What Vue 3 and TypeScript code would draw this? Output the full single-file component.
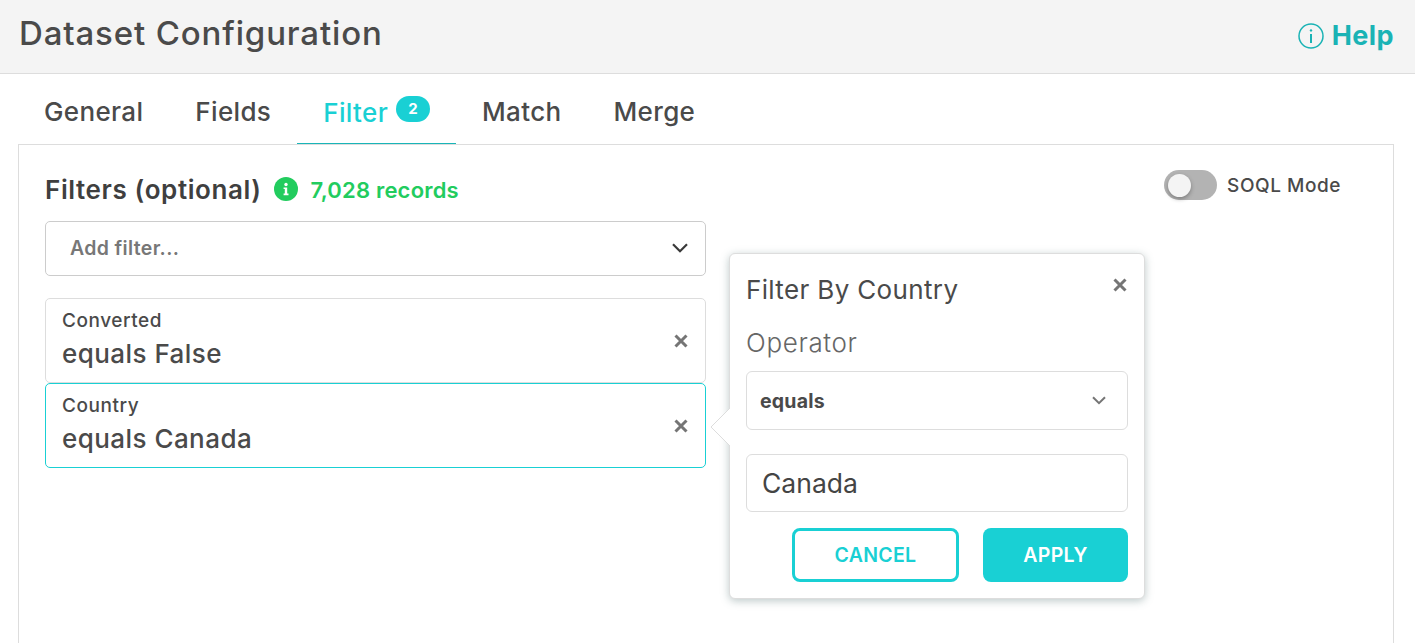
<script setup lang="ts">
const tabs = [
  { label: 'General' },
  { label: 'Fields' },
  { label: 'Filter', badge: 2, active: true },
  { label: 'Match' },
  { label: 'Merge' },
]
const filters = [
  { field: 'Converted', value: 'equals False', active: false },
  { field: 'Country', value: 'equals Canada', active: true },
]
</script>

<template>
  <div class="page">
    <header class="top">
      <h1>Dataset Configuration</h1>
      <a class="help">
        <svg width="26" height="26" viewBox="0 0 26 26" fill="none" stroke="#1ab3b5" stroke-width="1.5">
          <circle cx="13" cy="13" r="12" />
          <path d="M13 11v9" stroke-width="2" />
          <circle cx="13" cy="7.4" r="1.2" fill="#1ab3b5" stroke="none" />
        </svg>
        <span>Help</span>
      </a>
    </header>

    <nav class="tabs">
      <div v-for="t in tabs" :key="t.label" class="tab" :class="{ active: t.active }">
        {{ t.label }}<sup v-if="t.badge" class="badge">{{ t.badge }}</sup>
      </div>
    </nav>

    <section class="panel">
      <div class="col">
        <div class="title-row">
          <h2>Filters (optional)</h2>
          <svg class="info" width="24" height="24" viewBox="0 0 24 24">
            <circle cx="12" cy="12" r="12" fill="#22cc5e" />
            <circle cx="12" cy="7.5" r="1.7" fill="#fff" />
            <path d="M9.6 10.4h3.6v6.2h1.3v1.6H9.6v-1.6h1.2v-4.6H9.6z" fill="#fff" />
          </svg>
          <span class="records">7,028 records</span>
        </div>

        <div class="add">
          <span>Add filter...</span>
          <svg width="16" height="10" viewBox="0 0 16 10" fill="none" stroke="#3a3a3a" stroke-width="2.2">
            <path d="M1 1.2l7 7 7-7" />
          </svg>
        </div>

        <div class="rows">
          <div v-for="f in filters" :key="f.field" class="row" :class="{ active: f.active }">
            <div>
              <div class="field">{{ f.field }}</div>
              <div class="value">{{ f.value }}</div>
            </div>
            <svg class="x" width="14" height="14" viewBox="0 0 14 14" stroke="#757575" stroke-width="3">
              <path d="M1.5 1.5l11 11M12.5 1.5l-11 11" />
            </svg>
          </div>
        </div>
      </div>

      <div class="soql">
        <div class="switch"><div class="knob" /></div>
        <span>SOQL Mode</span>
      </div>

      <div class="pop">
        <svg class="arrow" width="20" height="40" viewBox="0 0 20 40">
          <path d="M20 1L1 20l19 19z" fill="#fff" stroke="none" />
          <path d="M20 1L1 20l19 19" fill="none" stroke="#ddd" />
        </svg>
        <div class="pop-head">
          <span>Filter By Country</span>
          <svg width="14" height="14" viewBox="0 0 14 14" stroke="#757575" stroke-width="3">
            <path d="M1.5 1.5l11 11M12.5 1.5l-11 11" />
          </svg>
        </div>
        <div class="op">Operator</div>
        <div class="box select">
          <span>equals</span>
          <svg width="14" height="9" viewBox="0 0 14 9" fill="none" stroke="#757575" stroke-width="2">
            <path d="M1 1.2l6 6 6-6" />
          </svg>
        </div>
        <div class="box input">Canada</div>
        <div class="btns">
          <button class="btn ghost">CANCEL</button>
          <button class="btn solid">APPLY</button>
        </div>
      </div>
    </section>
  </div>
</template>

<style>
html, body { margin: 0; height: 100%; overflow: hidden; background: #fff; }
</style>

<style scoped>
.page {
  height: 643px; overflow: hidden; display: flex; flex-direction: column;
  font-family: Inter, "Open Sans", sans-serif; color: #4a4a4a;
}
.top {
  height: 74px; box-sizing: border-box; flex: none; display: flex; align-items: center; justify-content: space-between;
  padding: 0 21px 0 19px; background: #f4f4f4; border-bottom: 1px solid #ddd;
}
h1 { margin: -8px 0 0; font-size: 33px; font-weight: 500; letter-spacing: .85px; }
.help {
  display: flex; align-items: center; gap: 8px; margin-top: -2px;
  color: #1ab3b5; font-size: 27px; font-weight: 700; letter-spacing: .4px;
}
.tabs { height: 70px; flex: none; display: flex; padding-left: 18px; }
.tab {
  height: 70px; box-sizing: border-box; padding: 22px 26px 0; font-size: 26px; font-weight: 500;
  letter-spacing: .35px; white-space: nowrap;
}
.tab.active { color: #19d0d4; border-bottom: 1px solid #19b5b8; padding-top: 23px; }
.badge {
  display: inline-block; vertical-align: top; margin: -1px 0 0 8px; width: 34px; height: 26px;
  border-radius: 13px; background: #19d0d4; color: #fff; font-size: 15px; font-weight: 700;
  line-height: 25px; text-align: center; letter-spacing: 0;
}
.panel {
  position: relative; flex: 1; margin: 0 21px 0 18px; box-sizing: border-box;
  border: 1px solid #ddd; border-bottom: 0; padding: 25px 26px 0;
}
.col { width: 661px; }
.title-row { display: flex; align-items: center; height: 38px; }
h2 { margin: 0; font-size: 26px; font-weight: 600; color: #3f3f3f; white-space: nowrap; letter-spacing: .6px; }
.info { margin-left: 12px; }
.records { margin: 2px 0 0 13px; color: #22cc5e; font-size: 22px; font-weight: 600; white-space: nowrap; letter-spacing: .2px; }
.add {
  margin-top: 13px; height: 55px; box-sizing: border-box; display: flex; align-items: center;
  justify-content: space-between; padding: 0 17px 2px 24px;
  border: 1px solid #ccc; border-radius: 5px; color: #777; font-size: 19.5px; font-weight: 600; letter-spacing: .35px;
}
.rows { margin-top: 22px; display: flex; flex-direction: column; }
.row {
  height: 85px; box-sizing: border-box; display: flex; align-items: center; justify-content: space-between;
  padding: 0 17px 0 16px; border: 1px solid #ddd; border-radius: 5px;
}
.row.active { border-color: #19d0d4; }
.field { font-size: 19px; font-weight: 500; line-height: 24px; letter-spacing: .55px; margin-top: -2px; }
.value { font-size: 26px; font-weight: 500; line-height: 32px; margin-top: 5px; letter-spacing: .45px; }
.soql {
  position: absolute; top: 25px; right: 52px; display: flex; align-items: center; gap: 10px;
  font-size: 19px; font-weight: 500; letter-spacing: .55px;
}
.switch { width: 53px; height: 30px; border-radius: 15px; background: #b3b3b3; position: relative; }
.knob {
  position: absolute; left: 4px; top: 3.5px; width: 23px; height: 23px; border-radius: 50%;
  background: #f4f4f4; box-shadow: 0 2px 4px rgba(0,0,0,.3);
}
.pop {
  position: absolute; left: 710px; top: 108px; width: 416px; height: 346px; box-sizing: border-box;
  padding: 0 16px 0 16px; background: #fff; border: 1px solid #ddd; border-radius: 6px;
  box-shadow: 0 2px 8px rgba(90, 120, 120, .4);
}
.arrow { position: absolute; left: -20px; top: 153px; }
.pop-head {
  display: flex; justify-content: space-between; align-items: center; height: 71px;
  font-size: 26px; font-weight: 400; padding-right: 1px; padding-bottom: 1px; box-sizing: border-box;
  letter-spacing: .35px;
}
.pop-head svg { margin-top: -8px; }
.op { font-size: 26px; font-weight: 300; color: #666; line-height: 35px; letter-spacing: .65px; }
.box {
  height: 59px; box-sizing: border-box; border: 1px solid #ddd; border-radius: 6px;
  display: flex; align-items: center;
}
.select {
  margin-top: 11px; justify-content: space-between; padding: 0 21px 0 13px;
  font-size: 19.5px; font-weight: 700; letter-spacing: .2px;
}
.input { height: 58px; margin-top: 24px; padding-left: 15px; font-size: 26.5px; font-weight: 400; color: #444; }
.btns { display: flex; justify-content: flex-end; gap: 24px; margin-top: 16px; }
.btn {
  height: 54px; border-radius: 8px; font: inherit; font-size: 19.5px; font-weight: 600; box-sizing: border-box; padding: 0;
  letter-spacing: .3px;
}
.ghost { width: 167px; background: #fff; border: 3px solid #19d0d4; color: #19d0d4; }
.solid { width: 145px; background: #19d0d4; border: 0; color: #fff; }
</style>
